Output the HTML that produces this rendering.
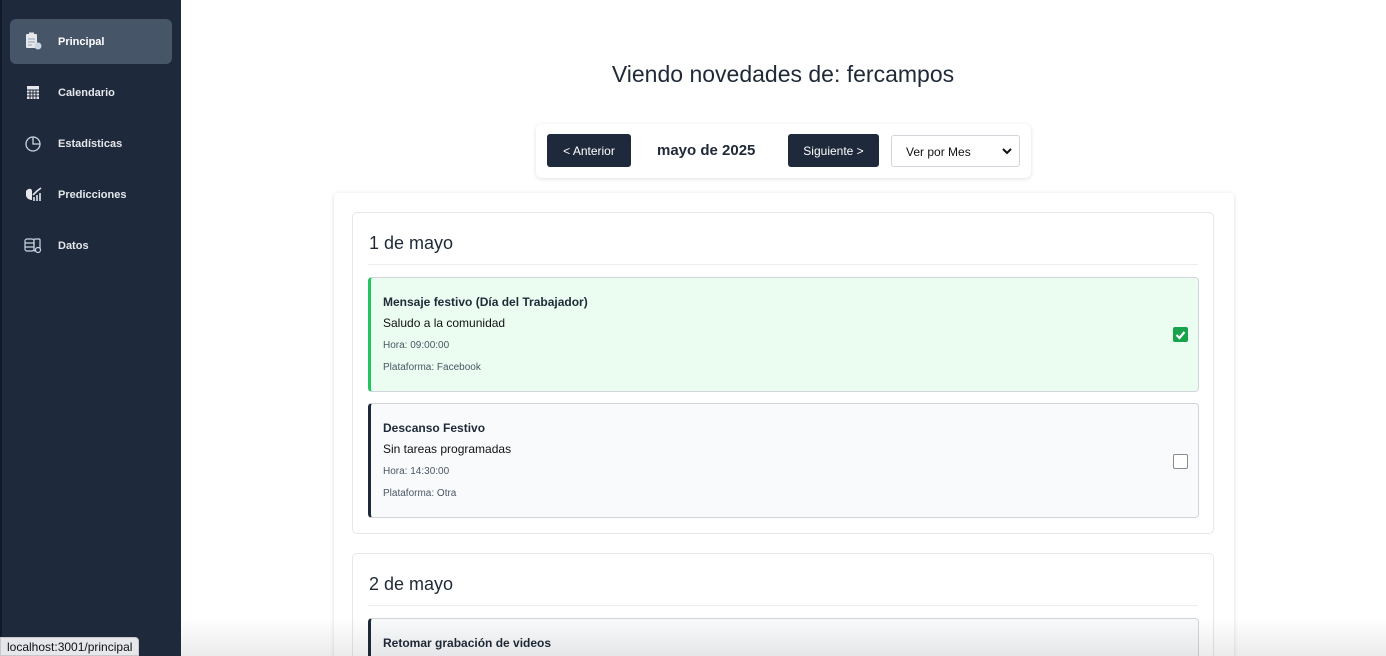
<!DOCTYPE html>
<html style="width:1386px;height:656px;overflow:hidden"><head><meta charset="utf-8"><style>
*{box-sizing:border-box;margin:0;padding:0}
body{width:1386px;height:656px;overflow:hidden;background:#fff;font-family:"Liberation Sans",sans-serif;position:relative;color:#1f2937}
.sb{position:absolute;left:0;top:0;width:181px;height:656px;background:#1e293b;border-left:2px solid #111827}
.nav{position:absolute;left:8px;width:162px;height:45px;border-radius:6px;color:#e5e7eb;font-size:11px;font-weight:bold;display:flex;align-items:center}
.nav.act{background:#475569;color:#fff}
.nav .ic{position:absolute;left:14px;top:13px;width:18px;height:18px}
.nav span{position:absolute;left:48px}
h1{position:absolute;left:0;width:1566px;top:61px;text-align:center;font-size:23px;font-weight:normal;color:#1f2937}
.bar{position:absolute;left:536px;top:124px;width:495px;height:54px;background:#fff;border-radius:6px;box-shadow:0 1px 4px rgba(0,0,0,.12)}
.btn{position:absolute;top:10px;height:33px;background:#1e293b;color:#fff;border-radius:3px;font-size:12px;display:flex;align-items:center;justify-content:center}
.sel{position:absolute;left:355px;top:11px;width:129px;height:32px;border:1px solid #d1d5db;border-radius:3px;font-size:12px;padding:9px 14px;color:#111}
.panel{position:absolute;left:334px;top:193px;width:900px;height:463px;background:#fff;box-shadow:0 1px 5px rgba(0,0,0,.14);border-radius:4px 4px 0 0;overflow:hidden}
.day{position:absolute;left:18px;width:862px;border:1px solid #e5e7eb;border-radius:5px;background:#fff}
.day h2{font-size:18px;font-weight:normal;color:#1f2937;position:absolute;left:16px;top:20px}
.day .hr{position:absolute;left:15px;right:15px;top:51px;border-top:1px solid #eceef1}
.ev{position:absolute;left:15px;width:831px;border:1px solid #d1d5db;border-left:3px solid #1e293b;border-radius:4px;background:#f8fafc}
.ev.g{background:#ebfdf1;border-left-color:#22c55e}
.ev b{position:absolute;left:12px;top:17px;font-size:12px;color:#1f2937}
.ev .d{position:absolute;left:12px;top:38px;font-size:12px;color:#111}
.ev .s{position:absolute;left:12px;font-size:10px;color:#4b5563}
.cb{position:absolute;left:802px;top:50px;width:15px;height:15px;border:1px solid #8a8a8a;border-radius:2px;background:#fff}
.cb.on{background:#16a34a;border-color:#16a34a}
.status{position:absolute;left:0;top:637px;height:19px;padding:2px 6px;background:#e5e7eb;border:1px solid #c8c8c8;border-radius:0 4px 0 0;font-size:12px;color:#111}
.fade{position:absolute;left:181px;right:0;top:618px;height:38px;background:linear-gradient(rgba(0,0,0,0),rgba(0,0,0,.08))}
</style></head><body>
<div class="sb">
 <div class="nav act" style="top:19px"><svg class="ic" viewBox="0 0 18 18"><rect x="2" y="2" width="11" height="14" rx="1" fill="#e5e7eb"/><rect x="5" y="0.5" width="5" height="3" fill="#e5e7eb"/><path d="M4 7h7M4 10h7M4 13h4" stroke="#94a3b8"/><circle cx="14" cy="14" r="3.5" fill="#cbd5e1"/></svg><span>Principal</span></div>
 <div class="nav" style="top:70px"><svg class="ic" viewBox="0 0 18 18"><rect x="3" y="3" width="12" height="13" fill="#e5e7eb"/><path d="M3 7h12M6 7v9M9 7v9M12 7v9M3 10h12M3 13h12" stroke="#1e293b"/></svg><span>Calendario</span></div>
 <div class="nav" style="top:121px"><svg class="ic" viewBox="0 0 18 18" fill="none" stroke="#cbd5e1" stroke-width="1.3"><circle cx="9" cy="10" r="7"/><path d="M9 3v7h7"/></svg><span>Estadísticas</span></div>
 <div class="nav" style="top:172px"><svg class="ic" viewBox="0 0 18 18"><path d="M2 6c2-3 6-3 6 0v9c-3 0-6-2-6-5z" fill="#e5e7eb"/><path d="M10 16v-4M13 16v-6M16 16v-8M9 10l4-4 4-3" stroke="#e5e7eb" stroke-width="1.6"/></svg><span>Predicciones</span></div>
 <div class="nav" style="top:223px"><svg class="ic" viewBox="0 0 18 18" fill="none" stroke="#cbd5e1" stroke-width="1.2"><rect x="1" y="3" width="9" height="12" rx="2"/><path d="M1 7h9M1 11h9"/><rect x="10" y="3" width="6" height="12" rx="1"/><circle cx="14" cy="14" r="2.5" fill="#1e293b"/></svg><span>Datos</span></div>
</div>
<h1>Viendo novedades de: fercampos</h1>
<div class="bar">
 <div class="btn" style="left:11px;width:84px">&lt; Anterior</div>
 <div style="position:absolute;left:121px;top:18px;font-size:15px;font-weight:bold;color:#1f2937">mayo de 2025</div>
 <div class="btn" style="left:252px;width:91px">Siguiente &gt;</div>
 <div class="sel">Ver por Mes<svg style="position:absolute;right:7px;top:12px" width="10" height="7" viewBox="0 0 10 7"><path d="M1 1l4 4 4-4" stroke="#111" stroke-width="2" fill="none"/></svg></div>
</div>
<div class="panel">
 <div class="day" style="top:19px;height:322px"><h2>1 de mayo</h2><div class="hr"></div>
  <div class="ev g" style="top:64px;height:115px"><b>Mensaje festivo (Día del Trabajador)</b><div class="d">Saludo a la comunidad</div><div class="s" style="top:62px">Hora: 09:00:00</div><div class="s" style="top:84px">Plataforma: Facebook</div>
   <div class="cb on" style="top:49px"><svg width="13" height="13" viewBox="0 0 13 13"><path d="M2.5 7l3 3 5-6" stroke="#fff" stroke-width="2.2" fill="none"/></svg></div></div>
  <div class="ev" style="top:190px;height:115px"><b>Descanso Festivo</b><div class="d">Sin tareas programadas</div><div class="s" style="top:62px">Hora: 14:30:00</div><div class="s" style="top:84px">Plataforma: Otra</div><div class="cb"></div></div>
 </div>
 <div class="day" style="top:360px;height:103px;border-bottom:none;border-radius:5px 5px 0 0"><h2>2 de mayo</h2><div class="hr"></div>
  <div class="ev" style="top:64px;height:39px;border-bottom:none;border-radius:4px 4px 0 0"><b>Retomar grabación de videos</b></div>
 </div>
</div>
<div class="fade"></div>
<div class="status">localhost:3001/principal</div>
</body></html>
